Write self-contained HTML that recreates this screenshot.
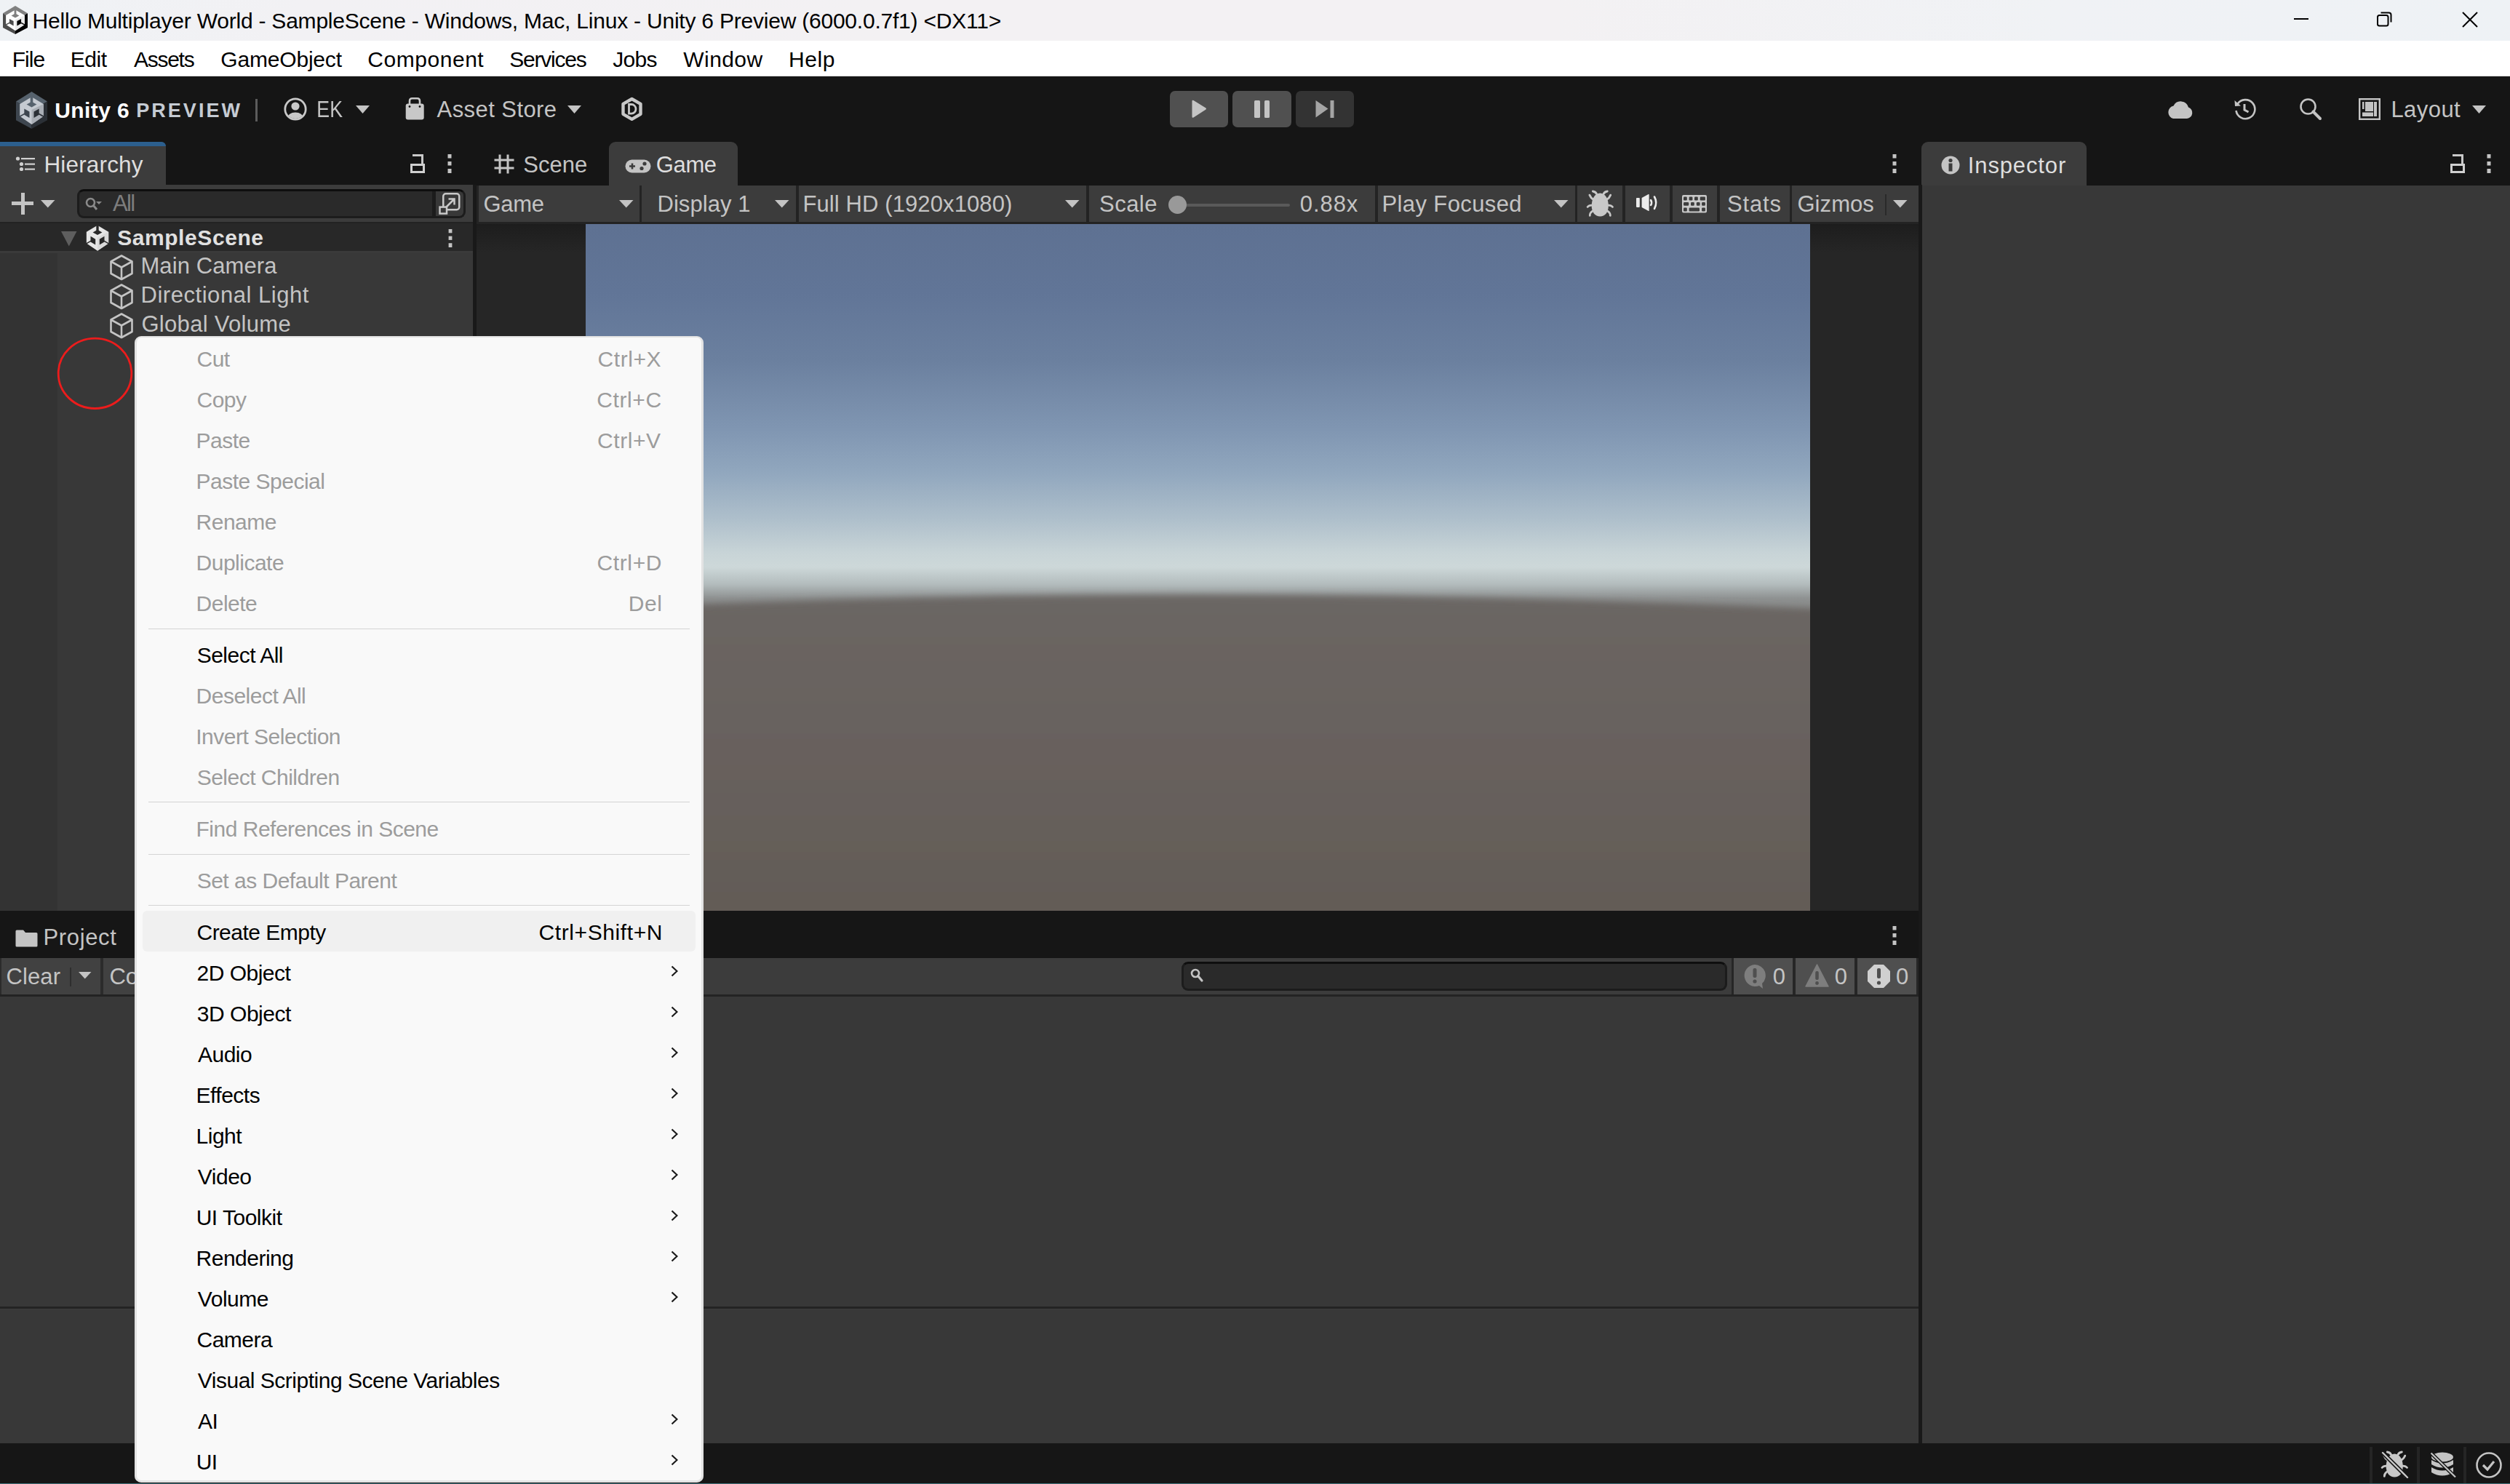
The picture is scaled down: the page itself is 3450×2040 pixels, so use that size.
<!DOCTYPE html>
<html><head><meta charset="utf-8">
<style>
*{margin:0;padding:0;box-sizing:border-box}
html,body{width:3450px;height:2040px;overflow:hidden;background:#151515;font-family:"Liberation Sans",sans-serif}
.a{position:absolute}
.t{position:absolute;white-space:nowrap;line-height:1}
</style></head><body>
<div class="a" style="left:0px;top:0px;width:3450px;height:56px;background:linear-gradient(90deg,#eff2f5 0%,#f2f1f4 12%,#f3f1f3 35%,#f3f1f3 62%,#f0f2f5 82%,#eef2f5 100%);"></div>
<svg class="a" style="left:4px;top:8px" width="34" height="39" viewBox="0 0 43 51" preserveAspectRatio="none"><polygon points="0,13.4 21.5,0 43,13.4 21.5,26" fill="#808080"/>
<polygon points="0,13.4 21.5,26 21.5,51 0,39.3" fill="#4d4d4d"/>
<polygon points="43,13.4 21.5,26 21.5,51 43,39.3" fill="#000000"/>
<polygon points="21.5,7.3 37.8,17 37.8,33.8 21.5,44.9 5.2,33.8 5.2,17" fill="#ffffff"/>
<polygon points="21.5,25 37.8,17 37.8,33.8 21.5,44.9" fill="#ececec"/>
<rect x="19.7" y="6" width="3.6" height="10" fill="#808080"/>
<polygon points="14.6,17.6 21.5,13.8 28.4,17.6 21.5,21.6" fill="#808080"/>
<polygon points="11.3,23.4 18.5,27.6 18.5,36 11.3,31.8" fill="#4d4d4d"/>
<path d="M5 34.2 L12 30.2" stroke="#4d4d4d" stroke-width="1.6"/>
<polygon points="31.7,23.4 24.5,27.6 24.5,36 31.7,31.8" fill="#000000"/>
<path d="M38 34.2 L31 30.2" stroke="#000000" stroke-width="1.6"/></svg>
<div class="t" style="left:44.54px;top:14.10px;font-size:30px;color:#000;letter-spacing:-0.220px;">Hello Multiplayer World - SampleScene - Windows, Mac, Linux - Unity 6 Preview (6000.0.7f1) &lt;DX11&gt;</div>
<div class="a" style="left:3153px;top:25px;width:20px;height:2.2px;background:#000;"></div>
<svg class="a" style="left:3266px;top:15px;" width="24" height="24" viewBox="0 0 24 24"><rect x="2" y="6" width="14.5" height="14.5" rx="2.5" fill="none" stroke="#000" stroke-width="2"/><path d="M6.5 2.5 H17.5 A3 3 0 0 1 20.5 5.5 V15.5" fill="none" stroke="#000" stroke-width="2"/></svg>
<svg class="a" style="left:3383px;top:15px;" width="24" height="24" viewBox="0 0 24 24"><path d="M2 2 L22 22 M22 2 L2 22" stroke="#000" stroke-width="2"/></svg>
<div class="a" style="left:0px;top:56px;width:3450px;height:48px;background:#fff;"></div>
<div class="a" style="left:0px;top:104px;width:3450px;height:1px;background:#dcdcdc;"></div>
<div class="t" style="left:16.64px;top:66.60px;font-size:30px;color:#000;letter-spacing:-0.888px;">File</div>
<div class="t" style="left:96.74px;top:66.60px;font-size:30px;color:#000;letter-spacing:-0.407px;">Edit</div>
<div class="t" style="left:183.94px;top:66.60px;font-size:30px;color:#000;letter-spacing:-1.258px;">Assets</div>
<div class="t" style="left:303.29px;top:66.60px;font-size:30px;color:#000;letter-spacing:-0.185px;">GameObject</div>
<div class="t" style="left:505.28px;top:66.60px;font-size:30px;color:#000;letter-spacing:0.542px;">Component</div>
<div class="t" style="left:700.24px;top:66.60px;font-size:30px;color:#000;letter-spacing:-1.229px;">Services</div>
<div class="t" style="left:842.13px;top:66.60px;font-size:30px;color:#000;letter-spacing:-0.674px;">Jobs</div>
<div class="t" style="left:939.37px;top:66.60px;font-size:30px;color:#000;letter-spacing:0.408px;">Window</div>
<div class="t" style="left:1084.04px;top:66.60px;font-size:30px;color:#000;letter-spacing:0.601px;">Help</div>
<svg class="a" style="left:22px;top:126px" width="43" height="51" viewBox="0 0 43 51" preserveAspectRatio="none"><polygon points="0,13.4 21.5,0 43,13.4 21.5,26" fill="#56626d"/>
<polygon points="0,13.4 21.5,26 21.5,51 0,39.3" fill="#3e464f"/>
<polygon points="43,13.4 21.5,26 21.5,51 43,39.3" fill="#2b3036"/>
<polygon points="21.5,7.3 37.8,17 37.8,33.8 21.5,44.9 5.2,33.8 5.2,17" fill="#c5cad1"/>
<polygon points="21.5,25 37.8,17 37.8,33.8 21.5,44.9" fill="#a9aeb5"/>
<rect x="19.7" y="6" width="3.6" height="10" fill="#56626d"/>
<polygon points="14.6,17.6 21.5,13.8 28.4,17.6 21.5,21.6" fill="#56626d"/>
<polygon points="11.3,23.4 18.5,27.6 18.5,36 11.3,31.8" fill="#3e464f"/>
<path d="M5 34.2 L12 30.2" stroke="#3e464f" stroke-width="1.6"/>
<polygon points="31.7,23.4 24.5,27.6 24.5,36 31.7,31.8" fill="#2b3036"/>
<path d="M38 34.2 L31 30.2" stroke="#2b3036" stroke-width="1.6"/></svg>
<div class="t" style="left:75.20px;top:136.90px;font-size:30px;color:#fff;font-weight:bold;letter-spacing:0.412px;">Unity 6</div>
<div class="t" style="left:187.19px;top:139.44px;font-size:27px;color:#c5cbd3;font-weight:bold;letter-spacing:3.048px;">PREVIEW</div>
<div class="a" style="left:351px;top:136px;width:3px;height:31px;background:#5c5c5c;"></div>
<svg class="a" style="left:390px;top:134px;" width="32" height="32" viewBox="0 0 32 32"><defs><clipPath id="acc"><circle cx="16" cy="16" r="13"/></clipPath></defs><circle cx="16" cy="16" r="14.2" fill="none" stroke="#c8c8c8" stroke-width="2.8"/><circle cx="16" cy="12" r="5.6" fill="#c8c8c8"/><ellipse cx="16" cy="28" rx="11" ry="7.5" fill="#c8c8c8" clip-path="url(#acc)"/></svg>
<div class="t" style="left:434.86px;top:134.75px;font-size:31px;color:#c4c4c4;transform:scaleX(0.86);transform-origin:2.54px 0;">EK</div>
<svg class="a" style="left:489px;top:145px;" width="20" height="12" viewBox="0 0 20 12"><path d="M0 0 H19 L9.5 11Z" fill="#c4c4c4"/></svg>
<svg class="a" style="left:557px;top:134px;" width="27" height="32" viewBox="0 0 27 32"><rect x="0.7" y="8.6" width="25" height="22" rx="3" fill="#c8c8c8"/><path d="M6 13 V5 Q6 1.3 9.5 1.3 H16.5 Q20 1.3 20 5 V13" fill="none" stroke="#c8c8c8" stroke-width="2.6"/><circle cx="6" cy="12.5" r="1.4" fill="#151515"/><circle cx="20" cy="12.5" r="1.4" fill="#151515"/></svg>
<div class="t" style="left:600.54px;top:134.75px;font-size:31px;color:#c4c4c4;letter-spacing:0.433px;">Asset Store</div>
<svg class="a" style="left:780px;top:145px;" width="20" height="12" viewBox="0 0 20 12"><path d="M0 0 H19 L9.5 11Z" fill="#c4c4c4"/></svg>
<svg class="a" style="left:853px;top:133px;" width="31" height="34" viewBox="0 0 31 34"><polygon points="15.5,3 27.5,9.8 27.5,23.8 15.5,30.8 3.5,23.8 3.5,9.8" fill="none" stroke="#c8c8c8" stroke-width="4.4" stroke-linejoin="round"/><path d="M11.5 10.5 H15 A6 6.3 0 0 1 15 23.1 H11.5Z" fill="none" stroke="#c8c8c8" stroke-width="2.8"/></svg>
<div class="a" style="left:1608px;top:125px;width:80px;height:50px;background:#505050;border-radius:7px"></div>
<div class="a" style="left:1694px;top:125px;width:81px;height:50px;background:#505050;border-radius:7px"></div>
<div class="a" style="left:1781px;top:125px;width:80px;height:50px;background:#333333;border-radius:7px"></div>
<svg class="a" style="left:1637px;top:137px;" width="22" height="26" viewBox="0 0 22 26"><path d="M1.5 2 Q1.5 0 3.5 1 L20.5 11.5 Q21.5 12.5 20.5 13.5 L3.5 24.5 Q1.5 25.5 1.5 23.5Z" fill="#c4c4c4"/></svg>
<div class="a" style="left:1724px;top:138px;width:8px;height:24px;background:#c4c4c4;border-radius:1.5px"></div>
<div class="a" style="left:1738px;top:138px;width:7px;height:24px;background:#c4c4c4;border-radius:1.5px"></div>
<svg class="a" style="left:1808px;top:137px;" width="26" height="26" viewBox="0 0 26 26"><path d="M0.5 1 L17.5 12.5 L0.5 24.5Z" fill="#a5a5a5"/><rect x="20.5" y="1" width="5" height="24" fill="#a5a5a5"/></svg>
<svg class="a" style="left:2978px;top:136px;" width="37" height="28" viewBox="0 0 37 28"><path d="M9 27 H28 A8 8 0 0 0 30 11.5 A11 11 0 0 0 9.5 9.5 A9 9 0 0 0 9 27Z" fill="#c4c4c4"/></svg>
<svg class="a" style="left:3070px;top:134px;" width="32" height="32" viewBox="0 0 32 32"><path d="M5.5 9 A13 13 0 1 1 3.5 18" fill="none" stroke="#c4c4c4" stroke-width="2.6"/><path d="M1.5 4 L2 12 L10 11.5Z" fill="#c4c4c4"/><path d="M15 9 V17 L20.5 20" fill="none" stroke="#c4c4c4" stroke-width="3"/></svg>
<svg class="a" style="left:3160px;top:134px;" width="32" height="32" viewBox="0 0 32 32"><circle cx="12.5" cy="12.5" r="10" fill="none" stroke="#c4c4c4" stroke-width="2.6"/><path d="M19.5 19.5 L29 29" stroke="#c4c4c4" stroke-width="4" stroke-linecap="round"/></svg>
<svg class="a" style="left:3242px;top:135px;" width="30" height="30" viewBox="0 0 30 30"><rect x="1.2" y="1.2" width="27.6" height="27.6" fill="none" stroke="#c4c4c4" stroke-width="2.4"/><rect x="5" y="5" width="2.5" height="10" fill="#c4c4c4"/><rect x="9" y="5" width="11" height="13" fill="#c4c4c4"/><rect x="21" y="5" width="4" height="20" fill="#c4c4c4"/><rect x="5" y="19.5" width="15" height="5.5" fill="#c4c4c4"/></svg>
<div class="t" style="left:3286.46px;top:134.55px;font-size:31px;color:#c4c4c4;letter-spacing:0.425px;">Layout</div>
<svg class="a" style="left:3398px;top:145px;" width="20" height="12" viewBox="0 0 20 12"><path d="M0 0 H19 L9.5 11Z" fill="#c4c4c4"/></svg>
<div class="a" style="left:0px;top:195px;width:228px;height:60px;background:#3c3c3c;border-top-right-radius:7px"></div>
<div class="a" style="left:0px;top:195px;width:228px;height:6px;background:#2c5f8e;border-top-right-radius:7px"></div>
<svg class="a" style="left:21px;top:215px;" width="28" height="22" viewBox="0 0 28 22"><circle cx="3.5" cy="3" r="2.6" fill="#d0d0d0"/><circle cx="8.5" cy="10.5" r="2.6" fill="#d0d0d0"/><circle cx="8.5" cy="17.5" r="2.6" fill="#d0d0d0"/><rect x="8" y="2" width="19" height="2.2" fill="#d0d0d0"/><rect x="13" y="9.5" width="14" height="2.2" fill="#d0d0d0"/><rect x="13" y="16.5" width="14" height="2.2" fill="#d0d0d0"/></svg>
<div class="t" style="left:60.42px;top:211.33px;font-size:31.5px;color:#dedede;letter-spacing:0.160px;">Hierarchy</div>
<svg class="a" style="left:564px;top:211px;" width="21" height="28" viewBox="0 0 21 28"><path d="M3 2.5 H16.5 V14" fill="none" stroke="#c8c8c8" stroke-width="3"/><rect x="1.5" y="15.5" width="17" height="10" fill="none" stroke="#d0d0d0" stroke-width="3"/></svg>
<svg class="a" style="left:614.5px;top:212px" width="6" height="26" viewBox="0 0 6 26"><rect x="0.5" y="0" width="5" height="5.5" fill="#c4c4c4"/><rect x="0.5" y="10" width="5" height="5.5" fill="#c4c4c4"/><rect x="0.5" y="20" width="5" height="6" fill="#c4c4c4"/></svg>
<svg class="a" style="left:679px;top:212px;" width="28" height="27" viewBox="0 0 28 27"><path d="M8 0.5 V26.5 M19 0.5 V26.5 M0.5 8 H27.5 M0.5 19 H27.5" stroke="#c4c4c4" stroke-width="3"/></svg>
<div class="t" style="left:719.29px;top:211.25px;font-size:31px;color:#c4c4c4;letter-spacing:0.003px;">Scene</div>
<div class="a" style="left:837px;top:195px;width:177px;height:60px;background:#3c3c3c;border-top-left-radius:9px;border-top-right-radius:9px"></div>
<svg class="a" style="left:859px;top:219px;" width="36" height="19" viewBox="0 0 36 19"><rect x="0.5" y="0.5" width="35" height="18" rx="9" fill="#c4c4c4"/><path d="M6 9.5 H14 M10 5.5 V13.5" stroke="#3c3c3c" stroke-width="2.6"/><circle cx="27" cy="6" r="2.6" fill="#3c3c3c"/><circle cx="23" cy="12.5" r="2.6" fill="#3c3c3c"/></svg>
<div class="t" style="left:901.84px;top:211.25px;font-size:31px;color:#dedede;letter-spacing:-0.390px;">Game</div>
<svg class="a" style="left:2601px;top:212px" width="6" height="26" viewBox="0 0 6 26"><rect x="0.5" y="0" width="5" height="5.5" fill="#c4c4c4"/><rect x="0.5" y="10" width="5" height="5.5" fill="#c4c4c4"/><rect x="0.5" y="20" width="5" height="6" fill="#c4c4c4"/></svg>
<div class="a" style="left:2641px;top:195px;width:227px;height:60px;background:#3c3c3c;border-top-left-radius:9px;border-top-right-radius:9px"></div>
<svg class="a" style="left:2668px;top:214px;" width="26" height="26" viewBox="0 0 26 26"><circle cx="13" cy="13" r="12.5" fill="#c4c4c4"/><rect x="10.5" y="10.5" width="5" height="11" fill="#3c3c3c"/><circle cx="13" cy="6.5" r="2.6" fill="#3c3c3c"/></svg>
<div class="t" style="left:2704.84px;top:211.95px;font-size:31px;color:#dedede;letter-spacing:0.861px;">Inspector</div>
<svg class="a" style="left:3368px;top:211px;" width="21" height="28" viewBox="0 0 21 28"><path d="M3 2.5 H16.5 V14" fill="none" stroke="#c8c8c8" stroke-width="3"/><rect x="1.5" y="15.5" width="17" height="10" fill="none" stroke="#d0d0d0" stroke-width="3"/></svg>
<svg class="a" style="left:3418px;top:212px" width="6" height="26" viewBox="0 0 6 26"><rect x="0.5" y="0" width="5" height="5.5" fill="#c4c4c4"/><rect x="0.5" y="10" width="5" height="5.5" fill="#c4c4c4"/><rect x="0.5" y="20" width="5" height="6" fill="#c4c4c4"/></svg>
<div class="a" style="left:0px;top:254px;width:650px;height:51px;background:#3c3c3c;"></div>
<div class="a" style="left:0px;top:305px;width:650px;height:2px;background:#232323;"></div>
<div class="a" style="left:0px;top:307px;width:650px;height:38px;background:#282828;"></div>
<div class="a" style="left:0px;top:345px;width:650px;height:3px;background:#3a3a3a;"></div>
<div class="a" style="left:0px;top:348px;width:650px;height:904px;background:#383838;"></div>
<div class="a" style="left:0px;top:348px;width:79px;height:904px;background:#333333;"></div>
<div class="a" style="left:650px;top:254px;width:5px;height:1000px;background:#191919;"></div>
<div class="a" style="left:16px;top:277px;width:30px;height:5px;background:#c4c4c4;"></div>
<div class="a" style="left:28.5px;top:265px;width:5px;height:30px;background:#c4c4c4;"></div>
<svg class="a" style="left:56px;top:275px;" width="20" height="11" viewBox="0 0 20 11"><path d="M0 0 H19.5 L9.75 10.5Z" fill="#c4c4c4"/></svg>
<div class="a" style="left:106px;top:260px;width:534px;height:40px;background:#2a2a2a;border:3px solid #1c1c1c;border-top-color:#0e0e0e;border-radius:9px"></div>
<svg class="a" style="left:117px;top:271px;" width="25" height="21" viewBox="0 0 25 21"><circle cx="7.5" cy="7.5" r="5.5" fill="none" stroke="#8a8a8a" stroke-width="2.6"/><path d="M11 11 L16 17" stroke="#8a8a8a" stroke-width="3"/><path d="M15 6 H23 L19 10Z" fill="#8a8a8a"/></svg>
<div class="t" style="left:154.94px;top:263.75px;font-size:31px;color:#7d7d7d;letter-spacing:-1.659px;">All</div>
<div class="a" style="left:594px;top:263px;width:5px;height:34px;background:#1c1c1c;"></div>
<div class="a" style="left:599px;top:263px;width:38px;height:34px;background:#383838;border-top-right-radius:6px;border-bottom-right-radius:6px"></div>
<svg class="a" style="left:594px;top:260px;" width="46" height="40" viewBox="0 0 46 40"><rect x="15.25" y="6.25" width="22" height="22" rx="3.5" fill="none" stroke="#c8c8c8" stroke-width="2.5"/><path d="M18 26 L30.5 13.5 M22.5 13.5 H30.5 V21.5" fill="none" stroke="#c8c8c8" stroke-width="2.5"/><rect x="10.5" y="24.6" width="9.5" height="9" fill="#383838" stroke="#c8c8c8" stroke-width="2.5"/></svg>
<svg class="a" style="left:84px;top:318px;" width="22" height="21" viewBox="0 0 22 21"><path d="M0 0 H21.5 L10.75 20.5Z" fill="#5e5e5e"/></svg>
<svg class="a" style="left:114.06px;top:303.2px" width="40" height="47.5" viewBox="0 0 43 51" preserveAspectRatio="none">
<polygon points="21.5,7.3 37.8,17 37.8,33.8 21.5,44.9 5.2,33.8 5.2,17" fill="#e6e6e6"/>
<polygon points="21.5,25 37.8,17 37.8,33.8 21.5,44.9" fill="#dadada"/>
<rect x="19.7" y="6" width="3.6" height="10" fill="#282828"/>
<polygon points="14.6,17.6 21.5,13.8 28.4,17.6 21.5,21.6" fill="#282828"/>
<polygon points="11.3,23.4 18.5,27.6 18.5,36 11.3,31.8" fill="#282828"/>
<path d="M5 34.2 L12 30.2" stroke="#282828" stroke-width="1.6"/>
<polygon points="31.7,23.4 24.5,27.6 24.5,36 31.7,31.8" fill="#282828"/>
<path d="M38 34.2 L31 30.2" stroke="#282828" stroke-width="1.6"/></svg>
<div class="t" style="left:161.14px;top:312.10px;font-size:30px;color:#e0e0e0;font-weight:bold;letter-spacing:0.576px;">SampleScene</div>
<svg class="a" style="left:616px;top:315px" width="6" height="25" viewBox="0 0 6 26"><rect x="0.5" y="0" width="5" height="5.5" fill="#c4c4c4"/><rect x="0.5" y="10" width="5" height="5.5" fill="#c4c4c4"/><rect x="0.5" y="20" width="5" height="6" fill="#c4c4c4"/></svg>
<svg class="a" style="left:151px;top:350px;" width="33" height="36" viewBox="0 0 33 36"><path d="M16 1.5 L30.5 9.5 V26 L16 34 L1.5 26 V9.5Z M1.5 9.5 L16 17.5 L30.5 9.5 M16 17.5 V34" fill="none" stroke="#c4c4c4" stroke-width="2.6" stroke-linejoin="round"/></svg>
<div class="t" style="left:193.46px;top:350.25px;font-size:31px;color:#c4c4c4;letter-spacing:0.090px;">Main Camera</div>
<svg class="a" style="left:151px;top:390px;" width="33" height="36" viewBox="0 0 33 36"><path d="M16 1.5 L30.5 9.5 V26 L16 34 L1.5 26 V9.5Z M1.5 9.5 L16 17.5 L30.5 9.5 M16 17.5 V34" fill="none" stroke="#c4c4c4" stroke-width="2.6" stroke-linejoin="round"/></svg>
<div class="t" style="left:193.46px;top:390.25px;font-size:31px;color:#c4c4c4;letter-spacing:0.545px;">Directional Light</div>
<svg class="a" style="left:151px;top:430px;" width="33" height="36" viewBox="0 0 33 36"><path d="M16 1.5 L30.5 9.5 V26 L16 34 L1.5 26 V9.5Z M1.5 9.5 L16 17.5 L30.5 9.5 M16 17.5 V34" fill="none" stroke="#c4c4c4" stroke-width="2.6" stroke-linejoin="round"/></svg>
<div class="t" style="left:194.44px;top:430.25px;font-size:31px;color:#c4c4c4;letter-spacing:0.304px;">Global Volume</div>
<div class="a" style="left:655px;top:255px;width:1982px;height:51px;background:#3c3c3c;"></div>
<div class="a" style="left:655px;top:305px;width:1982px;height:3px;background:#232323;"></div>
<div class="a" style="left:655px;top:255px;width:3px;height:51px;background:#232323;"></div>
<div class="a" style="left:879px;top:255px;width:3px;height:51px;background:#232323;"></div>
<div class="a" style="left:1093.6px;top:255px;width:4.400000000000091px;height:51px;background:#232323;"></div>
<div class="a" style="left:1493px;top:255px;width:4px;height:51px;background:#232323;"></div>
<div class="a" style="left:1890px;top:255px;width:4px;height:51px;background:#232323;"></div>
<div class="a" style="left:2164.5px;top:255px;width:3.5px;height:51px;background:#232323;"></div>
<div class="a" style="left:2229.5px;top:255px;width:4.5px;height:51px;background:#232323;"></div>
<div class="a" style="left:2294.5px;top:255px;width:4.5px;height:51px;background:#232323;"></div>
<div class="a" style="left:2359.5px;top:255px;width:4.5px;height:51px;background:#232323;"></div>
<div class="a" style="left:2460px;top:255px;width:3px;height:51px;background:#232323;"></div>
<div class="t" style="left:664.44px;top:264.95px;font-size:31px;color:#c4c4c4;letter-spacing:-0.257px;">Game</div>
<svg class="a" style="left:851px;top:275px;" width="20" height="11" viewBox="0 0 20 11"><path d="M0 0 H19.5 L9.75 10.5Z" fill="#c4c4c4"/></svg>
<div class="t" style="left:903.46px;top:264.95px;font-size:31px;color:#c4c4c4;letter-spacing:0.072px;">Display 1</div>
<svg class="a" style="left:1065px;top:275px;" width="20" height="11" viewBox="0 0 20 11"><path d="M0 0 H19.5 L9.75 10.5Z" fill="#c4c4c4"/></svg>
<div class="t" style="left:1103.46px;top:264.95px;font-size:31px;color:#c4c4c4;letter-spacing:0.104px;">Full HD (1920x1080)</div>
<svg class="a" style="left:1464px;top:275px;" width="20" height="11" viewBox="0 0 20 11"><path d="M0 0 H19.5 L9.75 10.5Z" fill="#c4c4c4"/></svg>
<div class="t" style="left:1511.09px;top:264.95px;font-size:31px;color:#c4c4c4;letter-spacing:0.438px;">Scale</div>
<div class="a" style="left:1617px;top:280px;width:156px;height:4px;background:#5a5a5a;border-radius:2px"></div>
<div class="a" style="left:1605.5px;top:268.5px;width:25px;height:25px;background:#999999;border-radius:50%"></div>
<div class="t" style="left:1786.79px;top:264.95px;font-size:31px;color:#c4c4c4;letter-spacing:0.933px;">0.88x</div>
<div class="t" style="left:1899.46px;top:264.95px;font-size:31px;color:#c4c4c4;letter-spacing:0.387px;">Play Focused</div>
<svg class="a" style="left:2136px;top:275px;" width="20" height="11" viewBox="0 0 20 11"><path d="M0 0 H19.5 L9.75 10.5Z" fill="#c4c4c4"/></svg>
<svg class="a" style="left:2180px;top:260px;" width="40" height="40" viewBox="0 0 40 40"><path d="M19.3 5.4 C27 5.4 30.8 14 30.8 23 C30.8 32 26 37.6 19.3 37.6 C12.6 37.6 7.7 32 7.7 23 C7.7 14 11.6 5.4 19.3 5.4Z" fill="#c8c8c8"/><path d="M9.3 3 Q13 3.5 14.5 6.5 M29.3 3 Q25.6 3.5 24.1 6.5 M4.9 8.1 Q6.5 12 9.7 14 M33.7 8.1 Q32.1 12 28.9 14 M2.1 24.5 Q4 22 8.1 22.1 M36.5 24.5 Q34.6 22 30.5 22.1 M5.3 36.4 Q5.2 32.5 8.9 30.1 M33.3 36.4 Q33.4 32.5 29.7 30.1" fill="none" stroke="#c8c8c8" stroke-width="2.8" stroke-linecap="round"/></svg>
<svg class="a" style="left:2245px;top:264px;" width="40" height="30" viewBox="0 0 40 30"><rect x="4" y="8.1" width="4.8" height="12.8" rx="0.8" fill="#ececec"/><path d="M11.6 8 L20.8 3 Q21.6 2.6 21.6 3.6 V25.4 Q21.6 26.4 20.8 26 L11.6 21Z" fill="#ececec"/><path d="M24 11 Q26.3 14.5 24 18 M29 6.5 Q33.5 14.5 29 22.8" fill="none" stroke="#ececec" stroke-width="2.6" stroke-linecap="round"/></svg>
<svg class="a" style="left:2312px;top:267.5px;" width="34" height="25" viewBox="0 0 34 25"><rect x="0" y="0" width="34" height="24.5" rx="2" fill="#c8c8c8"/><g fill="#3c3c3c"><rect x="2" y="2.6" width="4.8" height="4.8" rx="1.2"/><rect x="9.6" y="2.6" width="4.8" height="4.8" rx="1.2"/><rect x="17" y="2.6" width="4.8" height="4.8" rx="1.2"/><rect x="24.7" y="2.6" width="7.2" height="4.8" rx="1.2"/><rect x="2" y="10" width="7.2" height="4.8" rx="1.2"/><rect x="12" y="10" width="4.8" height="4.8" rx="1.2"/><rect x="19.8" y="10" width="4.8" height="4.8" rx="1.2"/><rect x="27.1" y="10" width="4.8" height="4.8" rx="1.2"/><rect x="2" y="17.6" width="4.8" height="4.8" rx="1.2"/><rect x="9.6" y="17.6" width="14.4" height="4.8" rx="1.2"/><rect x="27.1" y="17.6" width="4.8" height="4.8" rx="1.2"/></g></svg>
<div class="t" style="left:2373.89px;top:264.95px;font-size:31px;color:#c4c4c4;letter-spacing:0.901px;">Stats</div>
<div class="t" style="left:2470.44px;top:264.95px;font-size:31px;color:#c4c4c4;letter-spacing:0.063px;">Gizmos</div>
<div class="a" style="left:2591px;top:267px;width:2px;height:29px;background:#2a2a2a;"></div>
<svg class="a" style="left:2602px;top:275px;" width="20" height="11" viewBox="0 0 20 11"><path d="M0 0 H19.5 L9.75 10.5Z" fill="#c4c4c4"/></svg>
<div class="a" style="left:655px;top:308px;width:1982px;height:944px;background:linear-gradient(180deg,#1d1d1d 0px,#262626 40px,#262626 100%);"></div>
<svg class="a" style="left:805px;top:308px" width="1683" height="944" viewBox="0 1 1683 944">
<defs>
<linearGradient id="sky" x1="0" y1="0" x2="0" y2="1">
<stop offset="0" stop-color="#5e7192"/><stop offset="0.1" stop-color="#617597"/><stop offset="0.2" stop-color="#6b809f"/><stop offset="0.3" stop-color="#8096b2"/><stop offset="0.363" stop-color="#91a7be"/><stop offset="0.43" stop-color="#aebfcb"/><stop offset="0.48" stop-color="#c8d4d7"/><stop offset="0.5" stop-color="#cdd8d9"/><stop offset="0.525" stop-color="#b3bcbd"/><stop offset="0.545" stop-color="#8f9292"/><stop offset="0.6" stop-color="#6b6764"/><stop offset="1" stop-color="#625b56"/>
</linearGradient>
<linearGradient id="gnd" x1="0" y1="0" x2="0" y2="1"><stop offset="0" stop-color="#6b6663"/><stop offset="1" stop-color="#625a55"/></linearGradient>
<filter id="bl" x="-10%" y="-10%" width="120%" height="120%"><feGaussianBlur stdDeviation="5"/></filter>
</defs>
<rect width="1683" height="945" fill="url(#sky)"/>
<g filter="url(#bl)"><path d="M-60 533 Q841 489 1743 533 L1743 1000 L-60 1000Z" fill="url(#gnd)"/></g>
</svg>
<div class="a" style="left:2637px;top:254px;width:5px;height:1730px;background:#191919;"></div>
<div class="a" style="left:2642px;top:255px;width:808px;height:1729px;background:#383838;"></div>
<div class="a" style="left:0px;top:1252px;width:2637px;height:65px;background:#161616;"></div>
<svg class="a" style="left:21px;top:1278px;" width="31" height="24" viewBox="0 0 31 24"><path d="M0.5 2 Q0.5 0.5 2 0.5 H11 L14 4 H29 Q30.5 4 30.5 5.5 V22 Q30.5 23.5 29 23.5 H2 Q0.5 23.5 0.5 22Z" fill="#c4c4c4"/></svg>
<div class="t" style="left:59.46px;top:1273.35px;font-size:31px;color:#c4c4c4;letter-spacing:0.650px;">Project</div>
<svg class="a" style="left:2601px;top:1273px" width="6" height="26" viewBox="0 0 6 26"><rect x="0.5" y="0" width="5" height="5.5" fill="#c4c4c4"/><rect x="0.5" y="10" width="5" height="5.5" fill="#c4c4c4"/><rect x="0.5" y="20" width="5" height="6" fill="#c4c4c4"/></svg>
<div class="a" style="left:0px;top:1317px;width:2637px;height:50px;background:#3c3c3c;"></div>
<div class="a" style="left:0px;top:1367px;width:2637px;height:3px;background:#232323;"></div>
<div class="a" style="left:0px;top:1317px;width:142px;height:50px;background:#2b2b2b;"></div>
<div class="a" style="left:2px;top:1317px;width:136px;height:50px;background:#414141;"></div>
<div class="t" style="left:8.43px;top:1327.15px;font-size:31px;color:#c4c4c4;letter-spacing:0.128px;">Clear</div>
<div class="a" style="left:96px;top:1330px;width:2px;height:26px;background:#2e2e2e;"></div>
<svg class="a" style="left:108px;top:1336px;" width="18" height="10" viewBox="0 0 18 10"><path d="M0 0 H17.5 L8.75 9.5Z" fill="#c4c4c4"/></svg>
<div class="a" style="left:142px;top:1317px;width:60px;height:50px;background:#414141;"></div>
<div class="t" style="left:150.43px;top:1327.15px;font-size:31px;color:#c4c4c4;">Collapse</div>
<div class="a" style="left:1624px;top:1322px;width:750px;height:40px;background:#2a2a2a;border:3px solid #1c1c1c;border-top-color:#0e0e0e;border-radius:9px"></div>
<svg class="a" style="left:1636px;top:1331px;" width="20" height="22" viewBox="0 0 20 22"><circle cx="7" cy="7" r="5" fill="none" stroke="#c4c4c4" stroke-width="2.6"/><path d="M10.5 10.5 L16 17" stroke="#c4c4c4" stroke-width="3.2" stroke-linecap="round"/></svg>
<div class="a" style="left:2380px;top:1317px;width:257px;height:50px;background:#262626;"></div>
<div class="a" style="left:2383px;top:1317px;width:81px;height:50px;background:#4f4f4f;"></div>
<div class="a" style="left:2468px;top:1317px;width:81px;height:50px;background:#4f4f4f;"></div>
<div class="a" style="left:2553px;top:1317px;width:81px;height:50px;background:#4f4f4f;"></div>
<svg class="a" style="left:2396px;top:1325px;" width="33" height="35" viewBox="0 0 33 35"><path d="M16 1 A15 15 0 1 0 22 30 L27 34 L26 27 A15 15 0 0 0 16 1Z" fill="#7e7e7e"/><rect x="13.5" y="6" width="5" height="13" rx="2" fill="#4f4f4f"/><circle cx="16" cy="24" r="2.6" fill="#4f4f4f"/></svg>
<div class="t" style="left:2436.79px;top:1327.05px;font-size:31px;color:#c4c4c4;">0</div>
<svg class="a" style="left:2481px;top:1325px;" width="33" height="33" viewBox="0 0 33 33"><path d="M16.5 1 L32 31 H1Z" fill="#7e7e7e" stroke="#7e7e7e" stroke-width="1.5" stroke-linejoin="round"/><rect x="14.2" y="10" width="4.6" height="12" rx="2" fill="#4f4f4f"/><circle cx="16.5" cy="26.5" r="2.4" fill="#4f4f4f"/></svg>
<div class="t" style="left:2521.79px;top:1327.05px;font-size:31px;color:#c4c4c4;">0</div>
<svg class="a" style="left:2566px;top:1325px;" width="33" height="34" viewBox="0 0 33 34"><polygon points="10,1 23,1 32,10 32,24 23,33 10,33 1,24 1,10" fill="#d0d0d0"/><rect x="14" y="6" width="5" height="14" rx="2" fill="#4f4f4f"/><circle cx="16.5" cy="26" r="2.6" fill="#4f4f4f"/></svg>
<div class="t" style="left:2606.09px;top:1327.05px;font-size:31px;color:#c4c4c4;">0</div>
<div class="a" style="left:0px;top:1370px;width:2637px;height:614px;background:#383838;"></div>
<div class="a" style="left:0px;top:1796px;width:2637px;height:3px;background:#232323;"></div>
<div class="a" style="left:0px;top:1799px;width:2637px;height:1px;background:#3c3c3c;"></div>
<div class="a" style="left:0px;top:1984px;width:3450px;height:56px;background:#161616;"></div>
<div class="a" style="left:3257px;top:1989px;width:4px;height:50px;background:#252525;"></div>
<div class="a" style="left:3322px;top:1989px;width:4px;height:50px;background:#252525;"></div>
<div class="a" style="left:3386px;top:1989px;width:4px;height:50px;background:#252525;"></div>
<svg class="a" style="left:3272px;top:1993px;" width="40" height="40" viewBox="0 0 40 40"><path d="M19.3 5.4 C27 5.4 30.8 14 30.8 23 C30.8 32 26 37.6 19.3 37.6 C12.6 37.6 7.7 32 7.7 23 C7.7 14 11.6 5.4 19.3 5.4Z" fill="#c8c8c8"/><path d="M9.3 3 Q13 3.5 14.5 6.5 M29.3 3 Q25.6 3.5 24.1 6.5 M4.9 8.1 Q6.5 12 9.7 14 M33.7 8.1 Q32.1 12 28.9 14 M2.1 24.5 Q4 22 8.1 22.1 M36.5 24.5 Q34.6 22 30.5 22.1 M5.3 36.4 Q5.2 32.5 8.9 30.1 M33.3 36.4 Q33.4 32.5 29.7 30.1" fill="none" stroke="#c8c8c8" stroke-width="2.8" stroke-linecap="round"/><path d="M3 4 L37 38" stroke="#161616" stroke-width="5.5"/><path d="M3 4 L37 38" stroke="#c8c8c8" stroke-width="2.4" stroke-linecap="round"/></svg>
<svg class="a" style="left:3340px;top:1996px;" width="36" height="36" viewBox="0 0 36 36"><ellipse cx="17" cy="7" rx="15" ry="6.5" fill="#c4c4c4"/><path d="M2 11 Q17 20 32 11 V17 Q17 26 2 17Z M2 21 Q17 30 32 21 V28 Q17 37 2 28Z" fill="#c4c4c4"/><path d="M1.5 1.5 L35 34.5" stroke="#161616" stroke-width="5"/><path d="M1.5 1.5 L35 34.5" stroke="#c4c4c4" stroke-width="2.2"/></svg>
<svg class="a" style="left:3403px;top:1996px;" width="36" height="36" viewBox="0 0 36 36"><circle cx="18" cy="18" r="16.5" fill="none" stroke="#c4c4c4" stroke-width="2.6"/><path d="M10 18 L16 24 L25 13" fill="none" stroke="#c4c4c4" stroke-width="3.2"/></svg>
<div class="a" style="left:0px;top:2039px;width:3450px;height:1px;background:#3f6f78;"></div>
<div class="a" style="left:185px;top:462px;width:782px;height:1576px;background:#f9f9f9;border:3px solid #e3e3e3;border-top-width:2px;border-radius:9px"></div>
<div class="t" style="left:270.48px;top:478.60px;font-size:30px;color:#9c9c9c;letter-spacing:-0.500px;">Cut</div>
<div class="t" style="left:821.44px;top:478.60px;font-size:30px;color:#9c9c9c;letter-spacing:0.600px;">Ctrl+X</div>
<div class="t" style="left:270.48px;top:534.60px;font-size:30px;color:#9c9c9c;letter-spacing:-0.500px;">Copy</div>
<div class="t" style="left:820.30px;top:534.60px;font-size:30px;color:#9c9c9c;letter-spacing:0.600px;">Ctrl+C</div>
<div class="t" style="left:269.54px;top:590.60px;font-size:30px;color:#9c9c9c;letter-spacing:-0.500px;">Paste</div>
<div class="t" style="left:820.94px;top:590.60px;font-size:30px;color:#9c9c9c;letter-spacing:0.600px;">Ctrl+V</div>
<div class="t" style="left:269.54px;top:646.60px;font-size:30px;color:#9c9c9c;letter-spacing:-0.500px;">Paste Special</div>
<div class="t" style="left:269.54px;top:702.60px;font-size:30px;color:#9c9c9c;letter-spacing:-0.500px;">Rename</div>
<div class="t" style="left:269.54px;top:758.60px;font-size:30px;color:#9c9c9c;letter-spacing:-0.500px;">Duplicate</div>
<div class="t" style="left:820.59px;top:758.60px;font-size:30px;color:#9c9c9c;letter-spacing:0.600px;">Ctrl+D</div>
<div class="t" style="left:269.54px;top:814.60px;font-size:30px;color:#9c9c9c;letter-spacing:-0.500px;">Delete</div>
<div class="t" style="left:863.78px;top:814.60px;font-size:30px;color:#9c9c9c;letter-spacing:0.600px;">Del</div>
<div class="a" style="left:204px;top:864px;width:744px;height:1px;background:#d4d4d4;"></div>
<div class="t" style="left:270.64px;top:885.60px;font-size:30px;color:#000000;letter-spacing:-0.500px;">Select All</div>
<div class="t" style="left:269.54px;top:941.60px;font-size:30px;color:#9c9c9c;letter-spacing:-0.500px;">Deselect All</div>
<div class="t" style="left:269.23px;top:997.60px;font-size:30px;color:#9c9c9c;letter-spacing:-0.500px;">Invert Selection</div>
<div class="t" style="left:270.64px;top:1053.60px;font-size:30px;color:#9c9c9c;letter-spacing:-0.500px;">Select Children</div>
<div class="a" style="left:204px;top:1102px;width:744px;height:1px;background:#d4d4d4;"></div>
<div class="t" style="left:269.54px;top:1124.60px;font-size:30px;color:#9c9c9c;letter-spacing:-0.500px;">Find References in Scene</div>
<div class="a" style="left:204px;top:1174px;width:744px;height:1px;background:#d4d4d4;"></div>
<div class="t" style="left:270.64px;top:1195.60px;font-size:30px;color:#9c9c9c;letter-spacing:-0.500px;">Set as Default Parent</div>
<div class="a" style="left:204px;top:1244px;width:744px;height:1px;background:#d4d4d4;"></div>
<div class="a" style="left:196px;top:1252px;width:760px;height:56px;background:#f0f0f0;border-radius:6px"></div>
<div class="t" style="left:270.48px;top:1266.60px;font-size:30px;color:#000000;letter-spacing:-0.500px;">Create Empty</div>
<div class="t" style="left:740.46px;top:1266.60px;font-size:30px;color:#000000;letter-spacing:0.600px;">Ctrl+Shift+N</div>
<div class="t" style="left:270.49px;top:1322.60px;font-size:30px;color:#000000;letter-spacing:-0.500px;">2D Object</div>
<svg class="a" style="left:922px;top:1327px;" width="10" height="16" viewBox="0 0 10 16"><path d="M1.5 1.5 L8.5 8 L1.5 14.5" fill="none" stroke="#1a1a1a" stroke-width="2.2"/></svg>
<div class="t" style="left:270.86px;top:1378.60px;font-size:30px;color:#000000;letter-spacing:-0.500px;">3D Object</div>
<svg class="a" style="left:922px;top:1383px;" width="10" height="16" viewBox="0 0 10 16"><path d="M1.5 1.5 L8.5 8 L1.5 14.5" fill="none" stroke="#1a1a1a" stroke-width="2.2"/></svg>
<div class="t" style="left:271.94px;top:1434.60px;font-size:30px;color:#000000;letter-spacing:-0.500px;">Audio</div>
<svg class="a" style="left:922px;top:1439px;" width="10" height="16" viewBox="0 0 10 16"><path d="M1.5 1.5 L8.5 8 L1.5 14.5" fill="none" stroke="#1a1a1a" stroke-width="2.2"/></svg>
<div class="t" style="left:269.54px;top:1490.60px;font-size:30px;color:#000000;letter-spacing:-0.500px;">Effects</div>
<svg class="a" style="left:922px;top:1495px;" width="10" height="16" viewBox="0 0 10 16"><path d="M1.5 1.5 L8.5 8 L1.5 14.5" fill="none" stroke="#1a1a1a" stroke-width="2.2"/></svg>
<div class="t" style="left:269.54px;top:1546.60px;font-size:30px;color:#000000;letter-spacing:-0.500px;">Light</div>
<svg class="a" style="left:922px;top:1551px;" width="10" height="16" viewBox="0 0 10 16"><path d="M1.5 1.5 L8.5 8 L1.5 14.5" fill="none" stroke="#1a1a1a" stroke-width="2.2"/></svg>
<div class="t" style="left:271.87px;top:1602.60px;font-size:30px;color:#000000;letter-spacing:-0.500px;">Video</div>
<svg class="a" style="left:922px;top:1607px;" width="10" height="16" viewBox="0 0 10 16"><path d="M1.5 1.5 L8.5 8 L1.5 14.5" fill="none" stroke="#1a1a1a" stroke-width="2.2"/></svg>
<div class="t" style="left:269.69px;top:1658.60px;font-size:30px;color:#000000;letter-spacing:-0.500px;">UI Toolkit</div>
<svg class="a" style="left:922px;top:1663px;" width="10" height="16" viewBox="0 0 10 16"><path d="M1.5 1.5 L8.5 8 L1.5 14.5" fill="none" stroke="#1a1a1a" stroke-width="2.2"/></svg>
<div class="t" style="left:269.54px;top:1714.60px;font-size:30px;color:#000000;letter-spacing:-0.500px;">Rendering</div>
<svg class="a" style="left:922px;top:1719px;" width="10" height="16" viewBox="0 0 10 16"><path d="M1.5 1.5 L8.5 8 L1.5 14.5" fill="none" stroke="#1a1a1a" stroke-width="2.2"/></svg>
<div class="t" style="left:271.87px;top:1770.60px;font-size:30px;color:#000000;letter-spacing:-0.500px;">Volume</div>
<svg class="a" style="left:922px;top:1775px;" width="10" height="16" viewBox="0 0 10 16"><path d="M1.5 1.5 L8.5 8 L1.5 14.5" fill="none" stroke="#1a1a1a" stroke-width="2.2"/></svg>
<div class="t" style="left:270.48px;top:1826.60px;font-size:30px;color:#000000;letter-spacing:-0.500px;">Camera</div>
<div class="t" style="left:271.87px;top:1882.60px;font-size:30px;color:#000000;letter-spacing:-0.500px;">Visual Scripting Scene Variables</div>
<div class="t" style="left:271.94px;top:1938.60px;font-size:30px;color:#000000;letter-spacing:-0.500px;">AI</div>
<svg class="a" style="left:922px;top:1943px;" width="10" height="16" viewBox="0 0 10 16"><path d="M1.5 1.5 L8.5 8 L1.5 14.5" fill="none" stroke="#1a1a1a" stroke-width="2.2"/></svg>
<div class="t" style="left:269.69px;top:1994.60px;font-size:30px;color:#000000;letter-spacing:-0.500px;">UI</div>
<svg class="a" style="left:922px;top:1999px;" width="10" height="16" viewBox="0 0 10 16"><path d="M1.5 1.5 L8.5 8 L1.5 14.5" fill="none" stroke="#1a1a1a" stroke-width="2.2"/></svg>
<svg class="a" style="left:75px;top:460px" width="112" height="108" viewBox="0 0 112 108"><ellipse cx="55.5" cy="53.3" rx="50.3" ry="48.2" fill="none" stroke="#ec1c1c" stroke-width="2.8"/></svg>
</body></html>
